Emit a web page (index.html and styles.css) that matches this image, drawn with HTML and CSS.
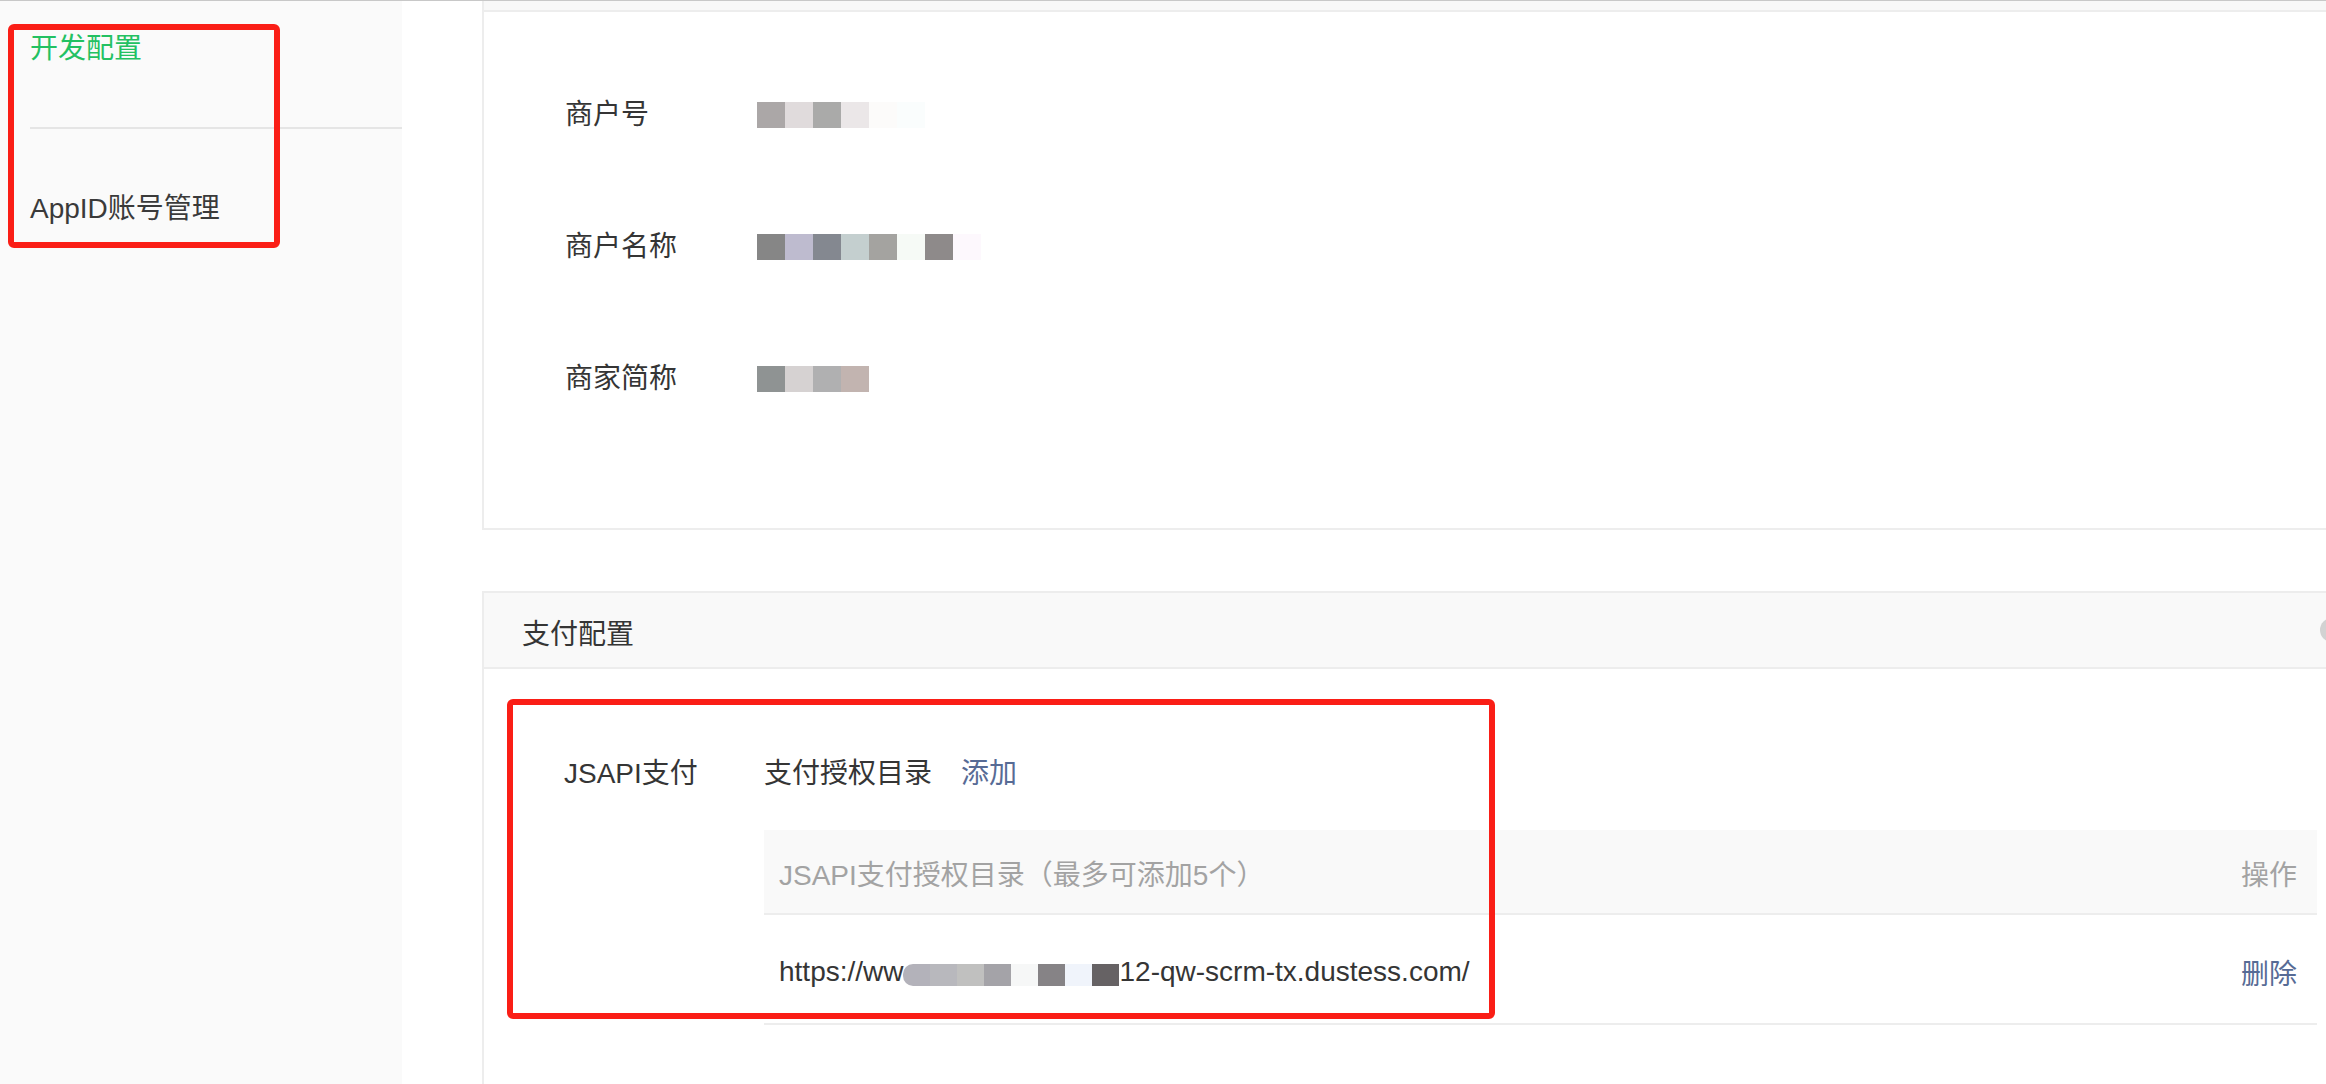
FILE: index.html
```html
<!DOCTYPE html>
<html lang="zh-CN">
<head>
<meta charset="utf-8">
<title>开发配置</title>
<link rel="stylesheet" href="styles.css">
</head>
<body>
<div class="page">
  <aside class="sidebar">
    <div class="nav-title">开发配置</div>
    <div class="nav-divider"></div>
    <div class="nav-item">AppID账号管理</div>
  </aside>
  <main class="main">
    <section class="card card-info">
      <div class="card-strip"></div>
      <div class="info-body">
        <div class="info-row">
          <div class="info-label">商户号</div>
          <div class="mosaic">
            <i style="background:#aba7a7"></i><i style="background:#e0dbdc"></i><i style="background:#aaaaa9"></i><i style="background:#ebe7e8"></i><i style="background:#fcfbfa"></i><i style="background:#fafdfd"></i>
          </div>
        </div>
        <div class="info-row">
          <div class="info-label">商户名称</div>
          <div class="mosaic">
            <i style="background:#868686"></i><i style="background:#bebbcf"></i><i style="background:#848890"></i><i style="background:#c4cfcf"></i><i style="background:#a4a3a0"></i><i style="background:#f6faf6"></i><i style="background:#8e8a8a"></i><i style="background:#fdf8fd"></i>
          </div>
        </div>
        <div class="info-row">
          <div class="info-label">商家简称</div>
          <div class="mosaic">
            <i style="background:#8f9393"></i><i style="background:#d6d2d2"></i><i style="background:#b0b0b1"></i><i style="background:#c2b4b0"></i>
          </div>
        </div>
      </div>
    </section>

    <section class="card card-pay">
      <header class="card-header">
        <span class="card-header-title">支付配置</span>
        <span class="header-dot"></span>
      </header>
      <div class="pay-body">
        <div class="pay-row">
          <div class="pay-label">JSAPI支付</div>
          <div class="pay-content">
            <div class="pay-title">
              <span>支付授权目录</span>
              <a class="link add-link">添加</a>
            </div>
            <div class="table">
              <div class="table-head">
                <span class="th-main">JSAPI支付授权目录（最多可添加5个）</span>
                <span class="th-op">操作</span>
              </div>
              <div class="table-row">
                <span class="td-url">https://ww<span class="url-mosaic"><i style="background:#b3b2ba"></i><i style="background:#b8b8bd"></i><i style="background:#c0c0bf"></i><i style="background:#a4a3a8"></i><i style="background:#f6f7f7"></i><i style="background:#868386"></i><i style="background:#f0f4fb"></i><i style="background:#666264"></i></span>12-qw-scrm-tx.dustess.com/</span>
                <a class="link td-op">删除</a>
              </div>
            </div>
          </div>
        </div>
      </div>
    </section>
  </main>
  <div class="mark mark-nav"></div>
  <div class="mark mark-pay"></div>
</div>
</body>
</html>
```

FILE: styles.css
```css
* { box-sizing: border-box; }

html, body {
  margin: 0;
  padding: 0;
  width: 2326px;
  height: 1084px;
  overflow: hidden;
  background: #ffffff;
}

body {
  font-family: "Liberation Sans", "Noto Sans CJK SC", sans-serif;
  font-size: 28px;
  color: #353535;
}

.page {
  position: relative;
  display: flex;
  height: 1084px;
  border-top: 1px solid #c8c8c8;
}

/* sidebar */
.sidebar {
  width: 402px;
  flex-shrink: 0;
  background: #fafafa;
  padding-top: 28px;
}

.nav-title {
  padding-left: 30px;
  line-height: 40px;
  color: #23c162;
}

.nav-divider {
  margin: 58px 0 0 30px;
  height: 2px;
  background: #e5e5e5;
}

.nav-item {
  margin-top: 60px;
  padding-left: 30px;
  line-height: 40px;
  color: #3a3a3a;
}

/* main */
.main {
  flex: 1;
  min-width: 0;
  padding-left: 80px;
  display: flex;
  flex-direction: column;
}

.card {
  border-left: 2px solid #ededed;
  background: #ffffff;
}

.card-strip {
  height: 11px;
  background: #f8f8f8;
  border-bottom: 2px solid #ededed;
}

.card-info {
  border-bottom: 2px solid #ededed;
}

.info-body {
  padding: 34px 0 86px 81px;
}

.info-row {
  display: flex;
  align-items: center;
  height: 132px;
}

.info-label {
  width: 192px;
  line-height: 40px;
  padding-top: 6px;
}

.mosaic {
  display: flex;
  margin-top: 6px;
}

.mosaic i {
  display: block;
  width: 28px;
  height: 26px;
}

/* pay card */
.card-pay {
  margin-top: 61px;
  border-top: 2px solid #ededed;
  flex: 1;
  overflow: hidden;
}

.card-header {
  height: 76px;
  background: #f9f9f9;
  border-bottom: 2px solid #ededed;
  display: flex;
  align-items: center;
  justify-content: space-between;
  padding-left: 38px;
  padding-top: 3px;
}

.header-dot {
  width: 24px;
  height: 24px;
  border-radius: 50%;
  background: #d2d2d2;
  margin-right: -18px;
  margin-top: -3px;
}

.pay-body {
  padding: 85px 9px 0 80px;
}

.pay-row {
  display: flex;
}

.pay-label {
  width: 200px;
  flex-shrink: 0;
  line-height: 40px;
}

.pay-content {
  flex: 1;
}

.pay-title {
  line-height: 40px;
  display: flex;
}

.link {
  color: #576b95;
  cursor: pointer;
}

.add-link {
  margin-left: 29px;
}

.table {
  margin-top: 36px;
}

.table-head {
  height: 85px;
  background: #f9f9f9;
  border-bottom: 2px solid #ededed;
  display: flex;
  align-items: center;
  justify-content: space-between;
  padding: 3px 20px 0 15px;
  color: #a3a3a3;
}

.table-row {
  height: 110px;
  border-bottom: 2px solid #ededed;
  display: flex;
  align-items: center;
  justify-content: space-between;
  padding: 5px 20px 0 15px;
}

.td-url {
  display: flex;
  align-items: center;
  color: #353535;
}

.url-mosaic {
  display: inline-flex;
  margin-top: 6px;
}

.url-mosaic i {
  display: block;
  width: 27px;
  height: 22px;
}

.url-mosaic i:first-child {
  border-radius: 10px 0 0 10px;
}

/* red annotation boxes */
.mark {
  position: absolute;
  border: 6px solid #fa1e16;
  border-radius: 6px;
  pointer-events: none;
}

.mark-nav {
  left: 8px;
  top: 23px;
  width: 272px;
  height: 224px;
}

.mark-pay {
  left: 507px;
  top: 698px;
  width: 988px;
  height: 320px;
}
```
